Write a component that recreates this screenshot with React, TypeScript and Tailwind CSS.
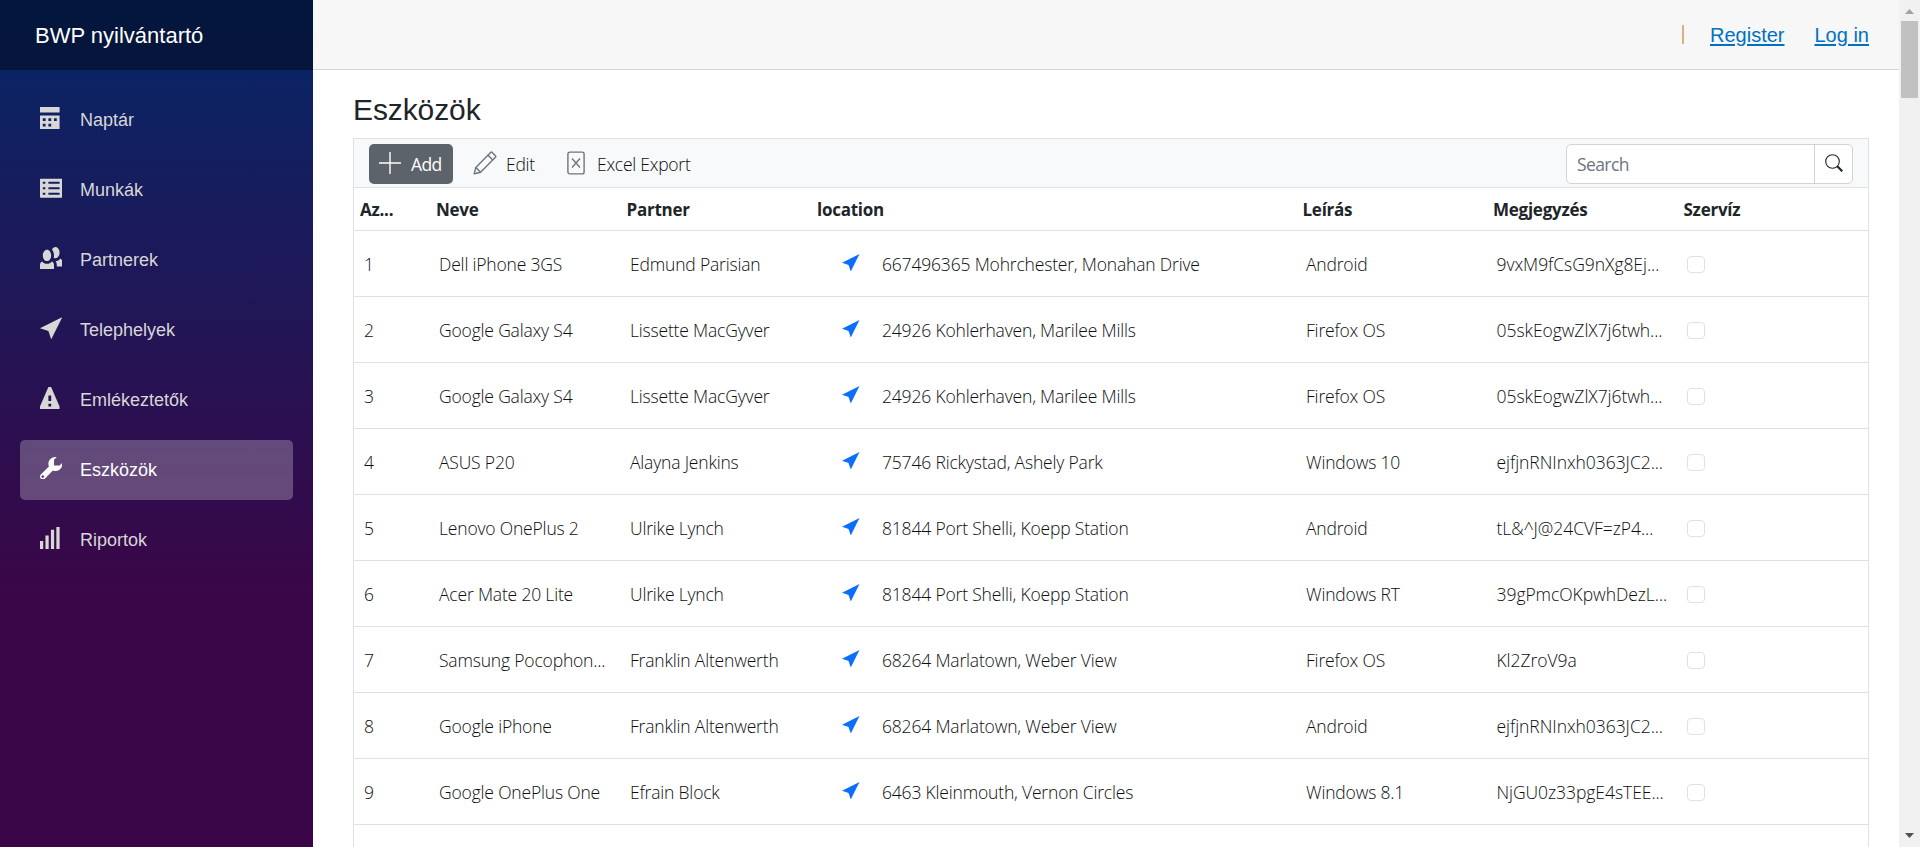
import React from "react";

const icons: Record<string, string> = {
  calendar: "M0 0v2h7v-2h-7zm0 3v4.91c0 .05.04.09.09.09h6.81c.05 0 .09-.04.09-.09v-4.91h-7zm1 1h1v1h-1v-1zm2 0h1v1h-1v-1zm2 0h1v1h-1v-1zm-4 2h1v1h-1v-1zm2 0h1v1h-1v-1z",
  list: "M.35 .6h7.3c.2 0 .35.15.35.35v6.1c0 .2-.15.35-.35.35h-7.3c-.2 0-.35-.15-.35-.35v-6.1c0-.2.15-.35.35-.35zM1 1.7v.7h.9v-.7zM3 1.7v.7h4v-.7zM1 3.65v.7h.9v-.7zM3 3.65v.7h4v-.7zM1 5.6v.7h.9v-.7zM3 5.6v.7h4v-.7z",
  people: "M5.5 0c-.51 0-.95.35-1.22.88.45.54.72 1.28.72 2.13 0 .29-.03.55-.09.81.19.11.38.19.59.19.83 0 1.5-.9 1.5-2s-.67-2-1.5-2zm-3 1c-.83 0-1.5.9-1.5 2s.67 2 1.5 2 1.5-.9 1.5-2-.67-2-1.5-2zm4.75 3.16c-.43.51-1.02.82-1.69.84.27.38.44.84.44 1.34v.66h2v-1.66c0-.52-.31-.97-.75-1.19zm-6.5 1c-.44.22-.75.67-.75 1.19v1.66h5v-1.66c0-.52-.31-.97-.75-1.19-.45.53-1.06.84-1.75.84s-1.3-.32-1.75-.84z",
  location: "M8 0l-8 4 3 1 1 3 4-8z",
  warning: "M3.09 0c-.06 0-.1.04-.13.09l-2.94 6.81c-.02.05-.03.13-.03.19v.81c0 .05.04.09.09.09h6.81c.05 0 .09-.04.09-.09v-.81c0-.05-.01-.14-.03-.19l-2.94-6.81c-.02-.05-.07-.09-.13-.09h-.81zm-.09 3h1v2h-1v-2zm0 3h1v1h-1v-1z",
  wrench: "M5.5 0c-1.38 0-2.5 1.12-2.5 2.5 0 .32.08.62.19.91l-2.91 2.88c-.39.39-.39 1.05 0 1.44.2.2.46.28.72.28.26 0 .52-.09.72-.28l2.88-2.91c.28.11.58.19.91.19 1.38 0 2.5-1.12 2.5-2.5 0-.16 0-.32-.03-.47l-.97.97h-2v-2l.97-.97c-.15-.03-.31-.03-.47-.03zm-4.5 6.5c.28 0 .5.22.5.5s-.22.5-.5.5-.5-.22-.5-.5.22-.5.5-.5z",
  signal: "M5.85 0v8h1.15v-8zM3.9 1v7h1.15v-7zM1.95 3v5h1.15v-5zM0 5v3h1.15v-3z",
};

function Glyph({ d, className }: { d: string; className: string }) {
  return (
    <svg viewBox="0 0 8 8" className={className} fill="currentColor" fillRule="evenodd">
      <path d={d} />
    </svg>
  );
}

const nav = [
  { label: "Naptár", icon: "calendar" },
  { label: "Munkák", icon: "list" },
  { label: "Partnerek", icon: "people" },
  { label: "Telephelyek", icon: "location" },
  { label: "Emlékeztetők", icon: "warning" },
  { label: "Eszközök", icon: "wrench", active: true },
  { label: "Riportok", icon: "signal" },
];

const headers = ["Az...", "Neve", "Partner", "location", "Leírás", "Megjegyzés", "Szervíz"];

const rows = [
  ["1", "Dell iPhone 3GS", "Edmund Parisian", "667496365 Mohrchester, Monahan Drive", "Android", "9vxM9fCsG9nXg8Ej..."],
  ["2", "Google Galaxy S4", "Lissette MacGyver", "24926 Kohlerhaven, Marilee Mills", "Firefox OS", "05skEogwZlX7j6twh..."],
  ["3", "Google Galaxy S4", "Lissette MacGyver", "24926 Kohlerhaven, Marilee Mills", "Firefox OS", "05skEogwZlX7j6twh..."],
  ["4", "ASUS P20", "Alayna Jenkins", "75746 Rickystad, Ashely Park", "Windows 10", "ejfjnRNInxh0363JC2..."],
  ["5", "Lenovo OnePlus 2", "Ulrike Lynch", "81844 Port Shelli, Koepp Station", "Android", "tL&^J@24CVF=zP4..."],
  ["6", "Acer Mate 20 Lite", "Ulrike Lynch", "81844 Port Shelli, Koepp Station", "Windows RT", "39gPmcOKpwhDezL..."],
  ["7", "Samsung Pocophon...", "Franklin Altenwerth", "68264 Marlatown, Weber View", "Firefox OS", "Kl2ZroV9a"],
  ["8", "Google iPhone", "Franklin Altenwerth", "68264 Marlatown, Weber View", "Android", "ejfjnRNInxh0363JC2..."],
  ["9", "Google OnePlus One", "Efrain Block", "6463 Kleinmouth, Vernon Circles", "Windows 8.1", "NjGU0z33pgE4sTEE..."],
];

const grid = "grid grid-cols-[76px_190.5px_190.5px_485.5px_190.5px_190.5px_1fr] items-center whitespace-nowrap border-b border-[#dee2e6]";

function Sidebar() {
  return (
    <aside className="w-[313px] shrink-0 bg-[linear-gradient(180deg,rgb(5,39,103)_0%,#3a0647_70%)]">
      <div className="flex h-[70px] items-center bg-black/40 pl-[35px] text-[22px] text-white">BWP nyilvántartó</div>
      <nav className="flex flex-col gap-[10px] px-5 pt-5">
        {nav.map((n) => (
          <a
            key={n.label}
            className={
              n.active
                ? "flex h-[60px] items-center rounded-[5px] bg-white/25 pl-5 text-[18px] text-white"
                : "flex h-[60px] items-center pl-5 text-[18px] text-[#d7d7d7]"
            }
          >
            <Glyph d={icons[n.icon]} className="mb-[4px] mr-[17.5px] size-[22.4px]" />
            {n.label}
          </a>
        ))}
      </nav>
    </aside>
  );
}

function Toolbar() {
  return (
    <div className="flex h-[49px] items-center border-b border-[#dee2e6] bg-[#f8f9fa] px-[15px] pt-px text-[17.5px] font-light tracking-[-0.25px] text-[#0c0e10]">
      <button className="flex h-10 w-[84px] items-center rounded-[5px] bg-[#5c636a] pl-[10px] font-normal tracking-[-0.6px] text-white">
        <svg viewBox="0 0 22 22" className="mb-[2px] mr-[10px] size-[22px]" fill="none" stroke="currentColor" strokeWidth="1.4">
          <path d="M11 0v22M0 11h22" />
        </svg>
        <span className="pt-px">Add</span>
      </button>
      <button className="ml-[20px] flex w-[62px] items-center">
        <svg viewBox="0 0 24 24" className="mb-[2px] mr-[9px] size-6 shrink-0" fill="none" stroke="#6c757d" strokeWidth="1.4" strokeLinejoin="round">
          <path d="M1.2 22.8l1.6-6.4L17.6 1.5q.8-.8 1.6 0l3.2 3.2q.8.8 0 1.6L7.6 21.2zM15 4.2l4.8 4.8M2.8 16.4l4.8 4.8" />
        </svg>
        <span className="pt-px">Edit</span>
      </button>
      <button className="ml-[32px] flex items-center">
        <svg viewBox="0 0 18 24" className="mb-[2px] mr-[12px] h-6 w-[18px]" fill="none" stroke="#6c757d" strokeWidth="1.4">
          <rect x=".9" y="1.1" width="16.2" height="21.8" rx="2" />
          <path d="M5 7.5l8 9M13 7.5l-8 9" />
        </svg>
        <span className="pt-px">Excel Export</span>
      </button>
      <div className="ml-auto flex h-10 w-[287px] rounded-[5px] border border-[#ced4da] bg-white">
        <div className="flex flex-1 items-center border-r border-[#ced4da] pl-[10px] pt-px font-normal tracking-[-0.6px] text-[#6c757d]">Search</div>
        <div className="flex w-[37px] items-center justify-center">
          <svg viewBox="0 0 18 18" className="mb-[2px] size-[18px]" fill="none" stroke="#212529">
            <circle cx="7.5" cy="7.5" r="6.8" strokeWidth="1.1" />
            <path d="M12.3 12.3l5 5" strokeWidth="2.2" />
          </svg>
        </div>
      </div>
    </div>
  );
}

function Scrollbar() {
  return (
    <div className="flex w-[21px] shrink-0 flex-col items-center bg-[#f1f1f1]">
      <svg viewBox="0 0 9 5" className="mt-[9px] h-[5px] w-[9px]" fill="#a3a3a3"><path d="M4.5 0L9 5H0z" /></svg>
      <div className="mt-[7px] h-[77px] w-[17px] bg-[#c1c1c1]" />
      <svg viewBox="0 0 9 5" className="mb-[9px] mt-auto h-[5px] w-[9px]" fill="#505050"><path d="M0 0h9L4.5 5z" /></svg>
    </div>
  );
}

export default function App() {
  return (
    <div className="flex h-[847px] w-[1920px] overflow-hidden bg-white font-['Liberation_Sans',sans-serif]">
      <Sidebar />
      <main className="flex min-w-0 flex-1 flex-col">
        <header className="flex h-[70px] shrink-0 items-center justify-end border-b border-[#d6d5d5] bg-[#f7f7f7] pr-[30px] text-[20px] text-[#0071c1]">
          <span className="mr-[26px] h-[19px] w-[2px] bg-[#dfae7b]" />
          <a className="mr-[30px] underline decoration-2 underline-offset-2">Register</a>
          <a className="underline decoration-2 underline-offset-2">Log in</a>
        </header>
        <h1 className="ml-10 mt-[21px] flex h-[36px] shrink-0 items-center text-[30px] tracking-[-0.1px] text-[#212529]">Eszközök</h1>
        <section className="ml-10 mr-[30px] mt-[11px] flex-1 border-x border-t border-[#dee2e6] font-['Open_Sans',sans-serif] text-[#212529]">
          <Toolbar />
          <div className={grid + " h-[43px] pt-px text-[17px] font-bold tracking-[-0.25px]"}>
            {headers.map((h) => (
              <div key={h} className="pl-[6px]">{h}</div>
            ))}
          </div>
          {rows.map((r) => (
            <div key={r[0]} className={grid + " h-[66px] pt-[2px] text-[17.5px] font-light tracking-[-0.18px] text-[#0c0e10]"}>
              <div className="pl-[10px]">{r[0]}</div>
              <div className="pl-[9px]">{r[1]}</div>
              <div className="pl-[9.5px]">{r[2]}</div>
              <div className="flex items-center pl-[31px]">
                <Glyph d={icons.location} className="mb-1 mr-[22.5px] size-[17.5px] text-[#0d6efd]" />
                {r[3]}
              </div>
              <div className="pl-[9.5px]">{r[4]}</div>
              <div className="pl-[9.5px] tracking-[-0.05px]">{r[5]}</div>
              <div className="pl-[9px]">
                <div className="h-[17px] w-[18px] rounded-[4px] border border-[#dee2e6]" />
              </div>
            </div>
          ))}
        </section>
      </main>
      <Scrollbar />
    </div>
  );
}
